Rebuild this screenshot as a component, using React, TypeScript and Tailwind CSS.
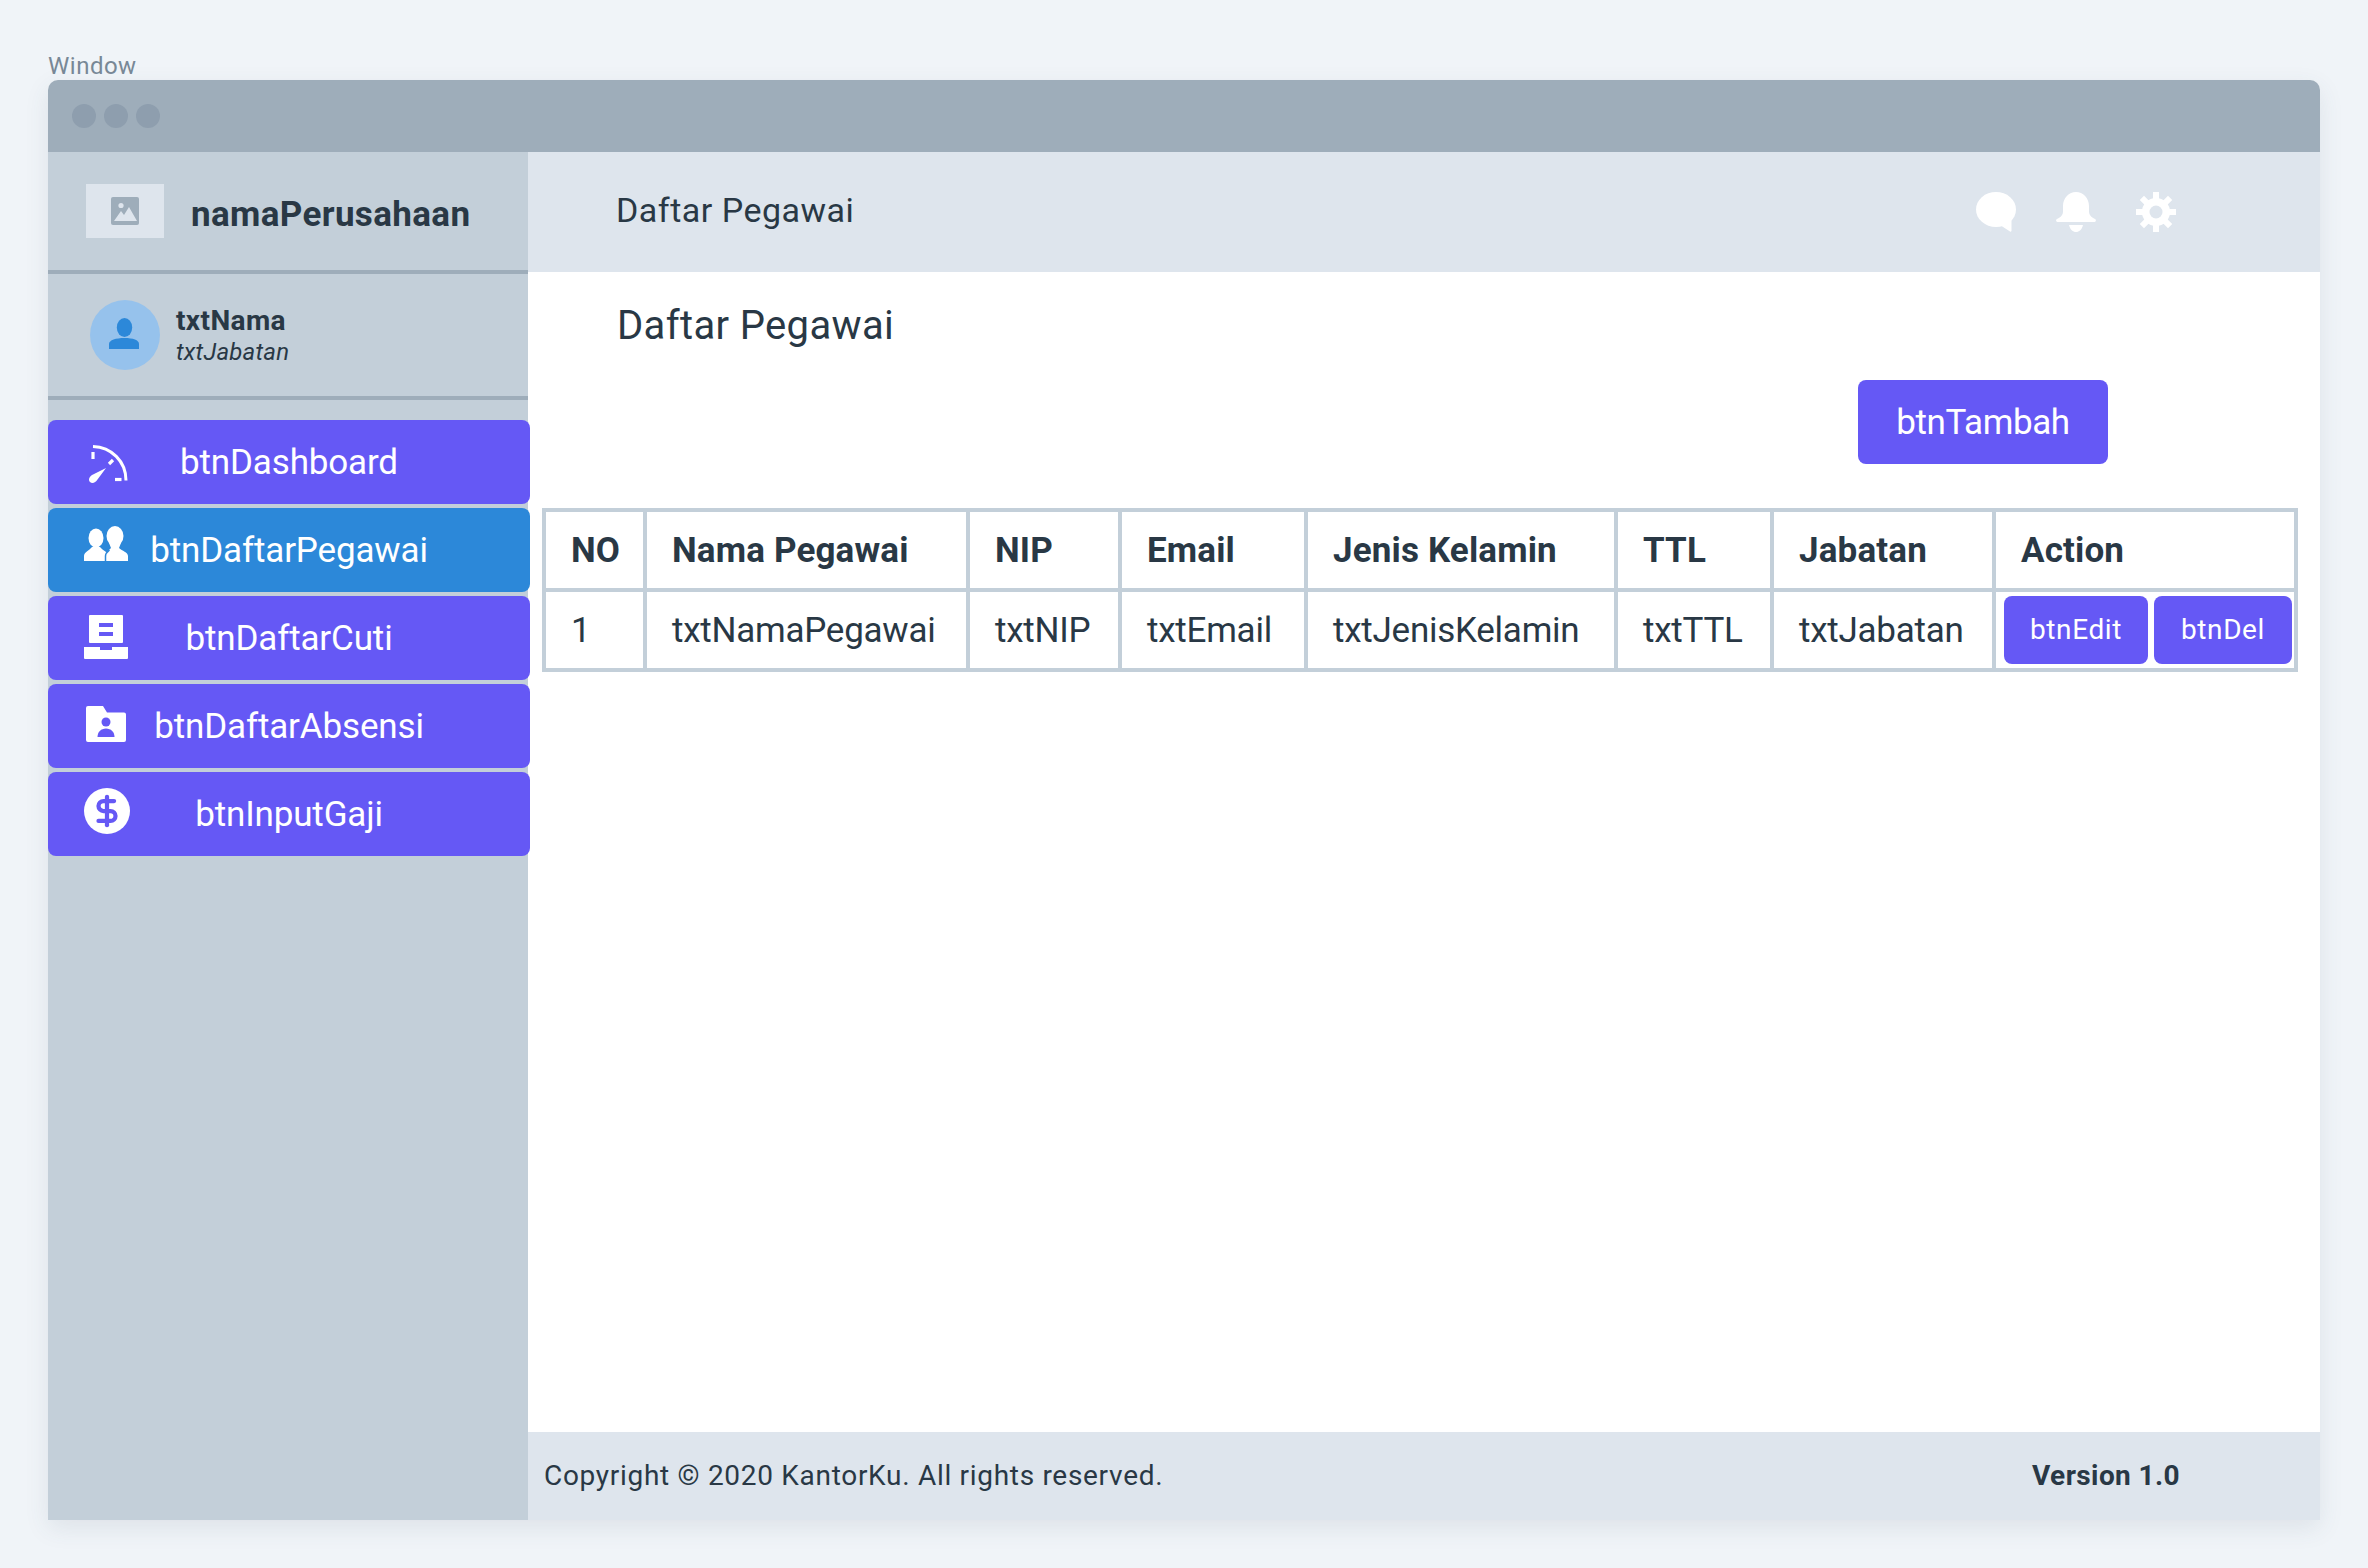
import { DollarSign } from 'lucide-react'

const font = { fontFamily: 'Roboto, sans-serif' }

function LogoIcon() {
  return (
    <svg width="28" height="28" viewBox="0 0 28 28">
      <rect width="28" height="28" rx="2" fill="#9eadba" />
      <circle cx="10" cy="8.5" r="2.6" fill="#dee5ed" />
      <path d="M3 24 L10 14 L13 18 L18 10 L26 24 Z" fill="#dee5ed" />
    </svg>
  )
}

function Person() {
  return (
    <svg width="70" height="70" viewBox="0 0 70 70">
      <ellipse cx="34.5" cy="27.5" rx="7.7" ry="9.5" fill="#2c88d9" />
      <path d="M19 49 V44 C19 40 26 38 34.5 38 C43 38 49 40 49 44 V49 Z" fill="#2c88d9" />
    </svg>
  )
}

function Gauge() {
  return (
    <svg width="40" height="40" viewBox="0 0 40 40" fill="none" stroke="#fff">
      <path d="M5 1.5 C23 2 38 16 38 35.5" strokeWidth="3" />
      <path d="M5 7 V14" strokeWidth="3.2" />
      <path d="M21 19 L25 15" strokeWidth="3.2" />
      <path d="M27 34.5 H33.5" strokeWidth="3.2" />
      <path d="M18 23 L5 29.5 C1 31.5 0 35 2 37 C4 39 7.5 38 9.5 34.5 Z" fill="#fff" stroke="none" />
    </svg>
  )
}

function Users() {
  return (
    <svg width="44" height="35" viewBox="0 0 44 35">
      <ellipse cx="12" cy="12" rx="7.5" ry="9.5" fill="#fff" />
      <path d="M0 35 V30 C0 26 5 25 8 21 H16 C19 25 24 26 26 30 V35 Z" fill="#fff" />
      <ellipse cx="31" cy="10" rx="8.5" ry="10" fill="#fff" />
      <path d="M22 35 V29 C22 26 24 25 27 22 L25 17 H37 L35 22 C38 25 44 26 44 30 V35 Z" fill="#fff" />
      <path d="M21.5 35 V30 C21.5 27 23 26 25.5 24" fill="none" stroke="#2c88d9" strokeWidth="1.5" />
    </svg>
  )
}

function Inbox() {
  return (
    <svg width="44" height="44" viewBox="0 0 44 44">
      <rect x="5" y="0" width="34" height="28" rx="1" fill="#fff" />
      <rect x="15" y="8" width="14" height="4" fill="#6558f5" />
      <rect x="15" y="17" width="14" height="4" fill="#6558f5" />
      <path d="M0 32 H16 V35 H28 V32 H44 V43 a1 1 0 0 1 -1 1 H1 a1 1 0 0 1 -1 -1 Z" fill="#fff" />
    </svg>
  )
}

function FolderUser() {
  return (
    <svg width="40" height="37" viewBox="0 0 40 37">
      <path d="M0 2 a2 2 0 0 1 2 -2 H17 L21 6.5 H38 a2 2 0 0 1 2 2 V34 a2 2 0 0 1 -2 2 H2 a2 2 0 0 1 -2 -2 Z" fill="#fff" />
      <circle cx="20" cy="16" r="4.5" fill="#6558f5" />
      <path d="M11.5 31 C11.5 26 15 22.5 20 22.5 C25 22.5 28.5 26 28.5 31 Z" fill="#6558f5" />
    </svg>
  )
}

function Dollar() {
  return (
    <div className="flex h-[46px] w-[46px] items-center justify-center rounded-full bg-white text-[#6558f5]">
      <DollarSign size={34} strokeWidth={3} />
    </div>
  )
}

function Chat() {
  return (
    <svg width="40" height="40" viewBox="0 0 40 40">
      <ellipse cx="20" cy="17.5" rx="20" ry="17.5" fill="#fff" />
      <path d="M24 33 L34 39.5 a1 1 0 0 0 1.5 -1 V26 Z" fill="#fff" />
    </svg>
  )
}

function Bell() {
  return (
    <svg width="40" height="40" viewBox="0 0 40 40">
      <path d="M20 0 C27 0 33 6 33 14 V19 C33 23 35 25 39 27 a1.6 1.6 0 0 1 -1 3 H2 a1.6 1.6 0 0 1 -1 -3 C5 25 7 23 7 19 V14 C7 6 13 0 20 0 Z" fill="#fff" />
      <path d="M13 33 H27 C26 37.5 23 40 20 40 C17 40 14 37.5 13 33 Z" fill="#fff" />
    </svg>
  )
}

function Gear() {
  const angles = [0, 45, 90, 135, 180, 225, 270, 315]
  return (
    <svg width="40" height="40" viewBox="0 0 40 40">
      {angles.map((a) => (
        <rect key={a} x="17" y="0" width="6" height="10" fill="#fff" transform={`rotate(${a} 20 20)`} />
      ))}
      <circle cx="20" cy="20" r="14" fill="#fff" />
      <circle cx="20" cy="20" r="6.5" fill="#dee5ed" />
    </svg>
  )
}

const navItems = [
  { label: 'btnDashboard', icon: <Gauge />, pos: 'left-[40px] top-[25px]', bg: 'bg-[#6558f5]' },
  { label: 'btnDaftarPegawai', icon: <Users />, pos: 'left-[36px] top-[18px]', bg: 'bg-[#2c88d9]' },
  { label: 'btnDaftarCuti', icon: <Inbox />, pos: 'left-[36px] top-[19px]', bg: 'bg-[#6558f5]' },
  { label: 'btnDaftarAbsensi', icon: <FolderUser />, pos: 'left-[38px] top-[22px]', bg: 'bg-[#6558f5]' },
  { label: 'btnInputGaji', icon: <Dollar />, pos: 'left-[36px] top-[16px]', bg: 'bg-[#6558f5]' },
]

const headers = ['NO', 'Nama Pegawai', 'NIP', 'Email', 'Jenis Kelamin', 'TTL', 'Jabatan', 'Action']
const cells = ['1', 'txtNamaPegawai', 'txtNIP', 'txtEmail', 'txtJenisKelamin', 'txtTTL', 'txtJabatan']

export default function App() {
  return (
    <div className="min-h-[1568px] bg-[#f0f4f8] px-[48px] pt-[52px] text-[#293845]" style={font}>
      <div className="h-[28px] text-[24px] leading-[28px] tracking-[0.5px] text-[#788896]">Window</div>

      <div className="h-[1440px] w-[2272px] overflow-hidden rounded-t-[10px] shadow-[0_8px_24px_rgba(60,80,100,0.1)]">
        <div className="flex h-[72px] items-center gap-[8px] bg-[#9eadba] pl-[24px]">
          <span className="h-[24px] w-[24px] rounded-full bg-[#8e9eae]" />
          <span className="h-[24px] w-[24px] rounded-full bg-[#8e9eae]" />
          <span className="h-[24px] w-[24px] rounded-full bg-[#8e9eae]" />
        </div>

        <div className="flex h-[1368px]">
          <aside className="w-[480px] shrink-0 bg-[#c3cfd9]">
            <div className="flex h-[122px] items-center border-b-4 border-[#9eadba] pl-[38px]">
              <div className="flex h-[54px] w-[78px] items-center justify-center bg-[#dee5ed]">
                <LogoIcon />
              </div>
              <div className="ml-[27px] pt-[8px] text-[35px] font-bold tracking-[0.35px]">namaPerusahaan</div>
            </div>

            <div className="flex h-[126px] items-center border-b-4 border-[#9eadba] pl-[42px]">
              <div className="h-[70px] w-[70px] rounded-full bg-[#96c2ec]">
                <Person />
              </div>
              <div className="ml-[16px] pt-[2px]">
                <div className="text-[28px] leading-[32px] font-bold tracking-[0.4px]">txtNama</div>
                <div className="text-[24px] leading-[30px] tracking-[0.2px] italic">txtJabatan</div>
              </div>
            </div>

            <nav className="flex w-[482px] flex-col gap-[4px] pt-[20px]">
              {navItems.map((item) => (
                <div
                  key={item.label}
                  className={`relative flex h-[84px] items-center justify-center rounded-[8px] pt-[2px] text-[35px] tracking-[-0.15px] text-white ${item.bg}`}
                >
                  <span className={`absolute ${item.pos}`}>{item.icon}</span>
                  {item.label}
                </div>
              ))}
            </nav>
          </aside>

          <div className="flex min-w-0 flex-1 flex-col bg-white">
            <header className="flex h-[120px] shrink-0 items-center justify-between bg-[#dee5ed] pr-[144px] pl-[88px]">
              <div className="pb-[3px] text-[34px] tracking-[0.5px]">Daftar Pegawai</div>
              <div className="flex gap-[40px]">
                <Chat />
                <Bell />
                <Gear />
              </div>
            </header>

            <main className="flex-1 pl-[14px]">
              <h1 className="pt-[29px] pl-[75px] text-[40px] leading-[50px] tracking-[0.35px]">Daftar Pegawai</h1>
              <div className="flex justify-end pt-[29px] pr-[212px]">
                <div className="flex h-[84px] w-[250px] items-center justify-center rounded-[8px] bg-[#6558f5] pt-[2px] text-[35px] tracking-[-0.4px] text-white">
                  btnTambah
                </div>
              </div>

              <table className="mt-[44px] w-[1754px] table-fixed border-collapse">
                <colgroup>
                  <col className="w-[101px]" />
                  <col className="w-[323px]" />
                  <col className="w-[152px]" />
                  <col className="w-[186px]" />
                  <col className="w-[310px]" />
                  <col className="w-[156px]" />
                  <col className="w-[222px]" />
                  <col className="w-[302px]" />
                </colgroup>
                <thead>
                  <tr className="h-[80px]">
                    {headers.map((h) => (
                      <th key={h} className="border-4 border-[#c3cfd9] pt-[2px] pl-[25px] text-left text-[35px] font-bold tracking-[0.15px]">
                        {h}
                      </th>
                    ))}
                  </tr>
                </thead>
                <tbody>
                  <tr className="h-[80px]">
                    {cells.map((c) => (
                      <td key={c} className="border-4 border-[#c3cfd9] pt-[2px] pl-[25px] text-[35px] tracking-[-0.25px]">
                        {c}
                      </td>
                    ))}
                    <td className="border-4 border-[#c3cfd9] pl-[8px]">
                      <div className="flex gap-[6px]">
                        <div className="flex h-[68px] w-[144px] items-center justify-center rounded-[8px] bg-[#6558f5] text-[28px] tracking-[0.6px] text-white">btnEdit</div>
                        <div className="flex h-[68px] w-[138px] items-center justify-center rounded-[8px] bg-[#6558f5] text-[28px] tracking-[0.6px] text-white">btnDel</div>
                      </div>
                    </td>
                  </tr>
                </tbody>
              </table>
            </main>

            <footer className="flex h-[88px] shrink-0 items-center justify-between bg-[#dee5ed] pr-[140px] pl-[16px] text-[28px]">
              <div className="tracking-[0.7px]">Copyright © 2020 KantorKu. All rights reserved.</div>
              <div className="font-bold tracking-[0.4px]">Version 1.0</div>
            </footer>
          </div>
        </div>
      </div>
    </div>
  )
}
